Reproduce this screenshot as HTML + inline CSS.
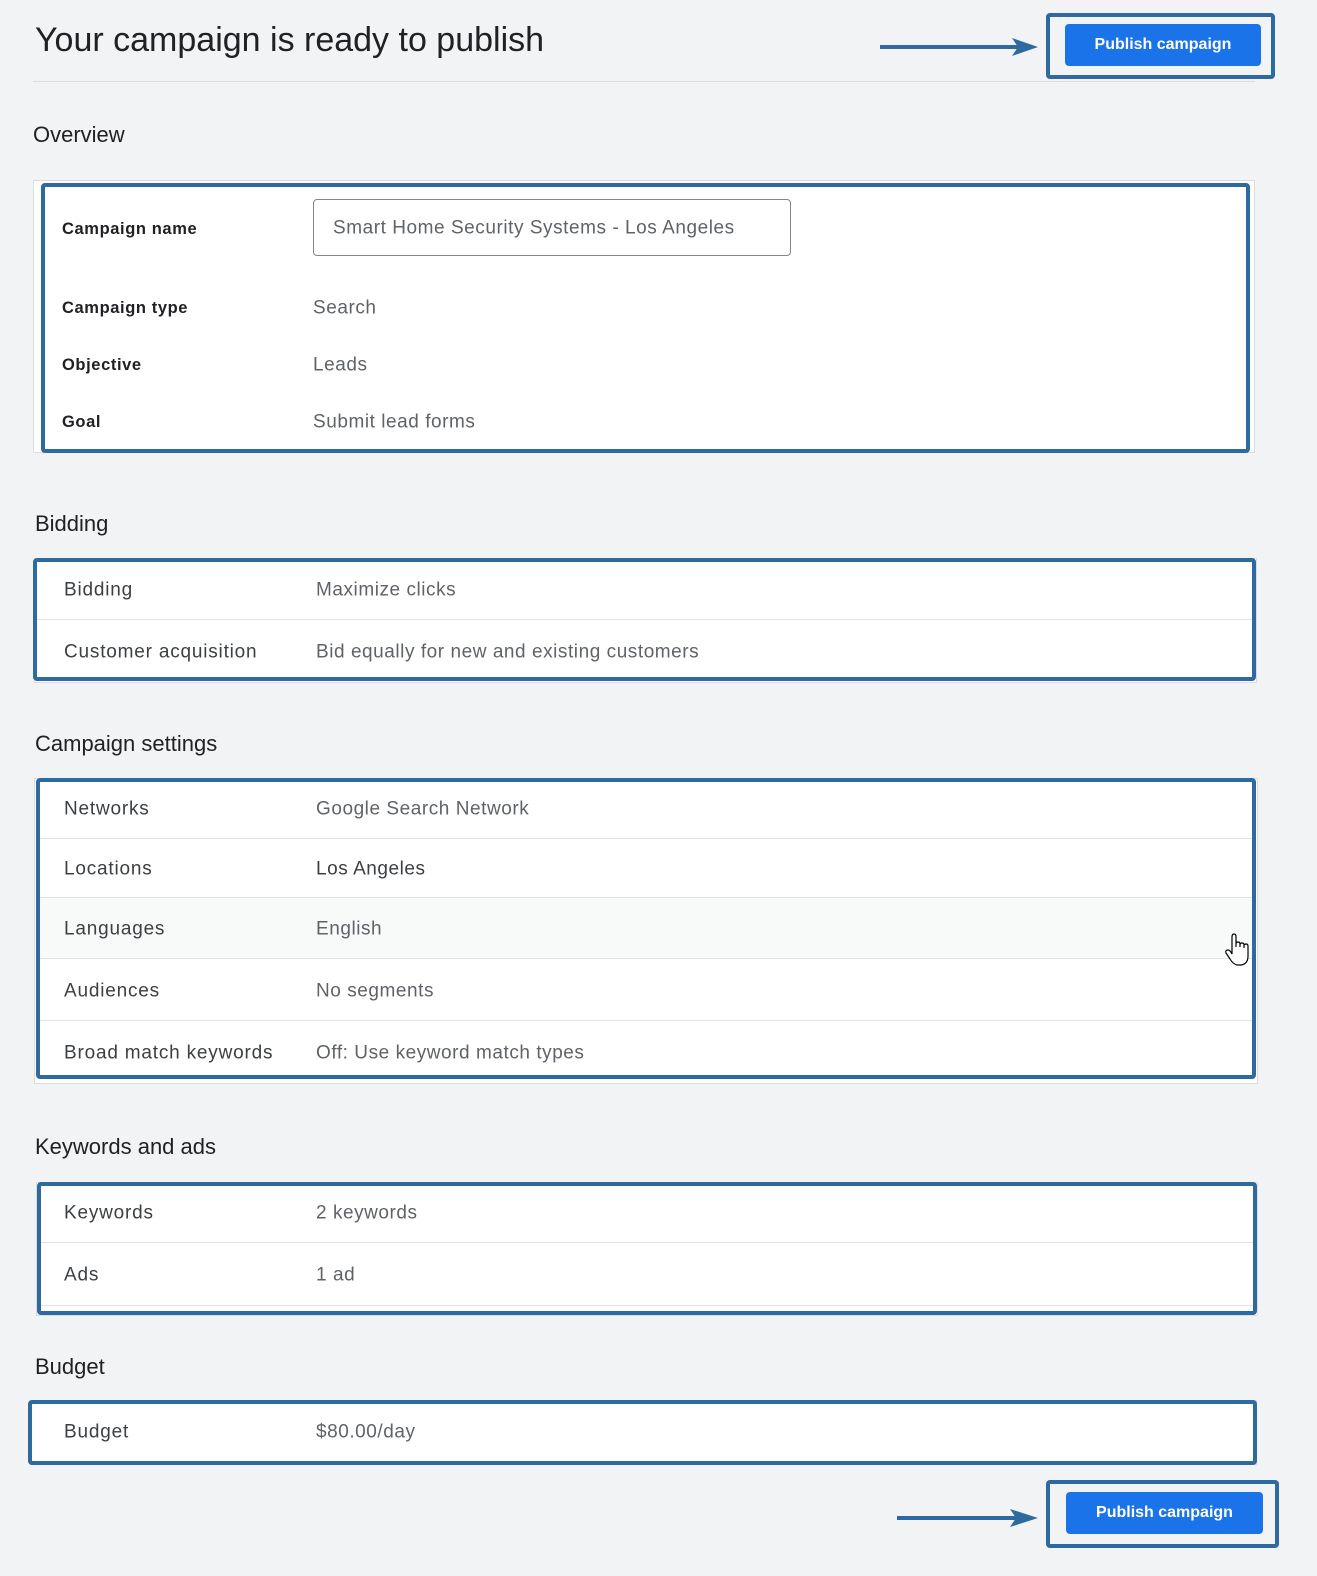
<!DOCTYPE html>
<html><head><meta charset="utf-8"><style>
body{margin:0;width:1317px;height:1576px;background:#f1f3f4;position:relative;font-family:"Liberation Sans",Arial,sans-serif;overflow:hidden}
.a{position:absolute}
.t{position:absolute;white-space:nowrap;line-height:1;transform:translateY(-50%)}
.h{font-size:22px;color:#202124}
.lb{font-size:19px;color:#3c4043;letter-spacing:0.8px}
.lo{font-size:16.5px;color:#202124;font-weight:bold;letter-spacing:0.6px}
.v{font-size:19px;color:#5f6368;letter-spacing:0.55px}
.card{position:absolute;background:#fff;border:1px solid #dadce0}
.box{position:absolute;border:4px solid #2c6aa0;border-radius:4px;box-sizing:border-box}
.div{position:absolute;height:1px;background:#e3e3e3}
.btn{position:absolute;background:#1a73e8;border-radius:4px;color:#fff;font-weight:bold;font-size:16px;display:flex;align-items:center;justify-content:center}
</style></head><body>
<div class="t" style="left:35px;top:40px;font-size:34px;color:#202124">Your campaign is ready to publish</div>
<div class="a" style="left:33px;top:81px;width:1222px;height:1px;background:#dadce0"></div>
<svg class="a" style="left:878px;top:37px" width="165" height="22"><line x1="2" y1="10" x2="150" y2="10" stroke="#2c6aa0" stroke-width="4"/><polygon points="134,1 160,10 134,19 140,10" fill="#2c6aa0"/></svg>
<div class="box" style="left:1046px;top:13px;width:229px;height:66px"></div>
<div class="btn" style="left:1065px;top:24px;width:196px;height:42px">Publish campaign</div>

<div class="t h" style="left:33px;top:135px">Overview</div>
<div class="card" style="left:33px;top:180px;width:1220px;height:271px"></div>
<div class="box" style="left:41px;top:183px;width:1209px;height:270px"></div>
<div class="t lo" style="left:62px;top:229px">Campaign name</div>
<div class="a" style="left:313px;top:199px;width:476px;height:55px;border:1px solid #80868b;border-radius:4px;background:#fff"></div>
<div class="t v" style="left:333px;top:228px;color:#5f6368">Smart Home Security Systems - Los Angeles</div>
<div class="t lo" style="left:62px;top:308px">Campaign type</div><div class="t v" style="left:313px;top:308px">Search</div>
<div class="t lo" style="left:62px;top:365px">Objective</div><div class="t v" style="left:313px;top:365px">Leads</div>
<div class="t lo" style="left:62px;top:422px">Goal</div><div class="t v" style="left:313px;top:422px">Submit lead forms</div>

<div class="t h" style="left:35px;top:524px">Bidding</div>
<div class="card" style="left:34px;top:558px;width:1221px;height:123px"></div>
<div class="div" style="left:37px;top:619px;width:1215px"></div>
<div class="box" style="left:33px;top:558px;width:1223px;height:123px"></div>
<div class="t lb" style="left:64px;top:590px">Bidding</div><div class="t v" style="left:316px;top:590px">Maximize clicks</div>
<div class="t lb" style="left:64px;top:652px">Customer acquisition</div><div class="t v" style="left:316px;top:652px">Bid equally for new and existing customers</div>

<div class="t h" style="left:35px;top:744px">Campaign settings</div>
<div class="card" style="left:34px;top:778px;width:1222px;height:304px"></div>
<div class="a" style="left:38px;top:898px;width:1215px;height:60px;background:#f8f9f9"></div>
<div class="div" style="left:38px;top:838px;width:1215px"></div>
<div class="div" style="left:38px;top:897px;width:1215px"></div>
<div class="div" style="left:38px;top:958px;width:1215px"></div>
<div class="div" style="left:38px;top:1020px;width:1215px"></div>
<div class="box" style="left:36px;top:778px;width:1220px;height:301px"></div>
<div class="t lb" style="left:64px;top:809px">Networks</div><div class="t v" style="left:316px;top:809px">Google Search Network</div>
<div class="t lb" style="left:64px;top:869px">Locations</div><div class="t v" style="left:316px;top:869px;color:#3c4043">Los Angeles</div>
<div class="t lb" style="left:64px;top:929px">Languages</div><div class="t v" style="left:316px;top:929px">English</div>
<div class="t lb" style="left:64px;top:991px">Audiences</div><div class="t v" style="left:316px;top:991px">No segments</div>
<div class="t lb" style="left:64px;top:1053px">Broad match keywords</div><div class="t v" style="left:316px;top:1053px">Off: Use keyword match types</div>
<svg class="a" style="left:1224px;top:932px" width="28" height="36"><path d="M8 22 L8 5 Q8 2 10 2 Q12 2 12 5 L12 15 L12 12 Q12 10 14 10 Q16 10 16 12 L16 15 L16 13 Q16 11 18 11 Q20 11 20 13 L20 16 L20 14 Q20 12 22 12 Q24 12 24 14 L24 24 Q24 32 17 33 L13 33 Q9 32 6 27 L2 21 Q1 18 4 18 Q6 18 8 22 Z" fill="#fff" stroke="#000" stroke-width="1.2"/></svg>

<div class="t h" style="left:35px;top:1147px">Keywords and ads</div>
<div class="card" style="left:36px;top:1182px;width:1220px;height:132px"></div>
<div class="div" style="left:40px;top:1242px;width:1213px"></div>
<div class="div" style="left:40px;top:1305px;width:1213px"></div>
<div class="box" style="left:37px;top:1182px;width:1220px;height:133px"></div>
<div class="t lb" style="left:64px;top:1213px">Keywords</div><div class="t v" style="left:316px;top:1213px">2 keywords</div>
<div class="t lb" style="left:64px;top:1275px">Ads</div><div class="t v" style="left:316px;top:1275px">1 ad</div>

<div class="t h" style="left:35px;top:1367px">Budget</div>
<div class="card" style="left:30px;top:1400px;width:1225px;height:63px"></div>
<div class="box" style="left:28px;top:1400px;width:1229px;height:65px"></div>
<div class="t lb" style="left:64px;top:1432px">Budget</div><div class="t v" style="left:316px;top:1432px">$80.00/day</div>

<svg class="a" style="left:895px;top:1507px" width="148" height="22"><line x1="2" y1="11" x2="132" y2="11" stroke="#2c6aa0" stroke-width="4"/><polygon points="115,2 143,11 115,20 121,11" fill="#2c6aa0"/></svg>
<div class="box" style="left:1046px;top:1480px;width:233px;height:68px"></div>
<div class="btn" style="left:1066px;top:1492px;width:197px;height:42px">Publish campaign</div>
</body></html>
